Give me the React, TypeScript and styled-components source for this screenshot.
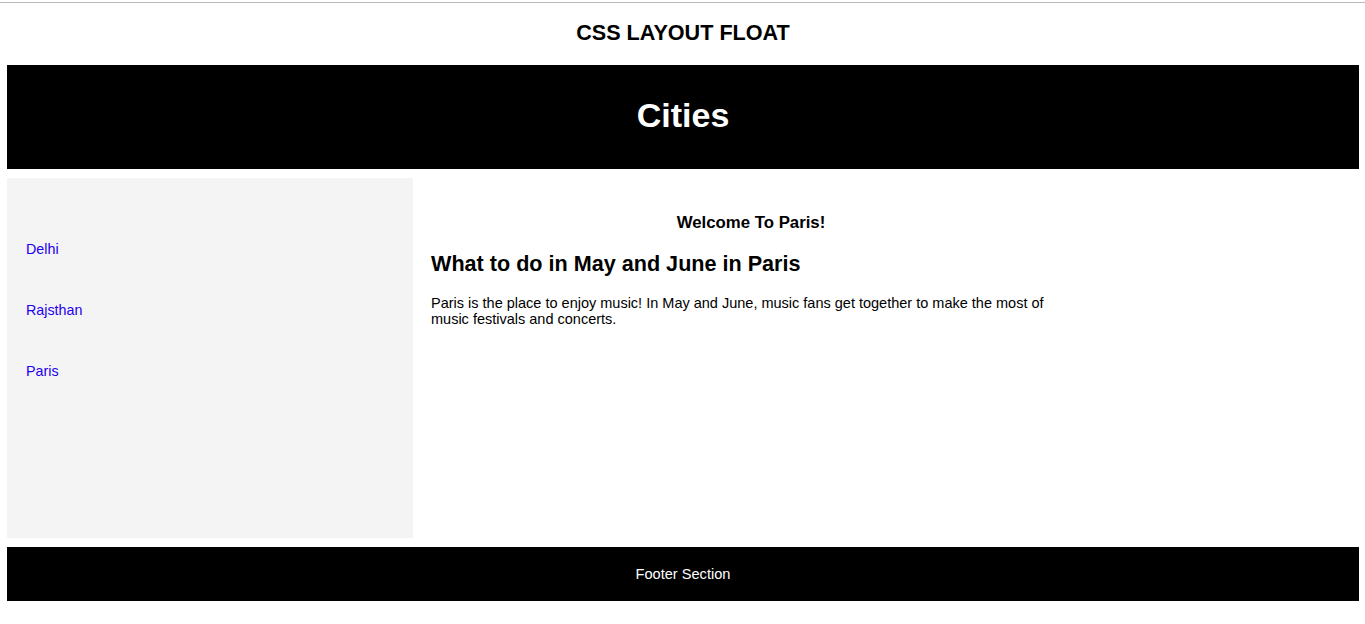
import React from "react";
import styled, { createGlobalStyle } from "styled-components";

const Global = createGlobalStyle`
  html, body { margin: 0; padding: 0; background: #fff; }
  body { font-family: "Liberation Sans", Arial, sans-serif; color: #000; }
`;

const TopRule = styled.div`
  margin-top: 2px;
  height: 1px;
  background: #b9b9b9;
`;

const Page = styled.div`
  width: 1352px;
  margin-left: 7px;
  display: flex;
  flex-direction: column;
`;

const PageTitle = styled.h2`
  margin: 0;
  height: 62px;
  padding-bottom: 2px;
  box-sizing: border-box;
  display: flex;
  align-items: center;
  justify-content: center;
  font-size: 21.6px;
  font-weight: bold;
`;

const Header = styled.header`
  height: 104px;
  background: #000;
  color: #fff;
  display: flex;
  align-items: center;
  justify-content: center;
  padding-bottom: 4px;
  box-sizing: border-box;
`;

const HeaderTitle = styled.h1`
  margin: 0;
  font-size: 34px;
  font-weight: bold;
`;

const Main = styled.div`
  display: flex;
  margin-top: 9px;
`;

const Sidebar = styled.nav`
  width: 406px;
  height: 360px;
  background: #f4f4f4;
  box-sizing: border-box;
  padding: 63px 19px 0;
  display: flex;
  flex-direction: column;
  gap: 45px;
`;

const NavLink = styled.a`
  color: #2200ee;
  text-decoration: none;
  font-size: 14.3px;
  line-height: 16px;
`;

const Article = styled.article`
  width: 676px;
  box-sizing: border-box;
  padding: 35px 18px 0;
`;

const Welcome = styled.h3`
  margin: 0;
  text-align: center;
  font-size: 16.8px;
  line-height: 20px;
`;

const SubHeading = styled.h2`
  margin: 18px 0 0;
  font-size: 21.6px;
  line-height: 26px;
`;

const Para = styled.p`
  margin: 18px 0 0;
  font-size: 14.5px;
  line-height: 16px;
`;

const Footer = styled.footer`
  margin-top: 9px;
  height: 54px;
  background: #000;
  color: #fff;
  display: flex;
  align-items: center;
  justify-content: center;
  font-size: 14.6px;
`;

export default function App() {
  return (
    <>
      <Global />
      <TopRule />
      <Page>
        <PageTitle>CSS LAYOUT FLOAT</PageTitle>
        <Header>
          <HeaderTitle>Cities</HeaderTitle>
        </Header>
        <Main>
          <Sidebar>
            <NavLink href="#">Delhi</NavLink>
            <NavLink href="#">Rajsthan</NavLink>
            <NavLink href="#">Paris</NavLink>
          </Sidebar>
          <Article>
            <Welcome>Welcome To Paris!</Welcome>
            <SubHeading>What to do in May and June in Paris</SubHeading>
            <Para>
              Paris is the place to enjoy music! In May and June, music fans get together to make the most of music festivals and concerts.
            </Para>
          </Article>
        </Main>
        <Footer>Footer Section</Footer>
      </Page>
    </>
  );
}
